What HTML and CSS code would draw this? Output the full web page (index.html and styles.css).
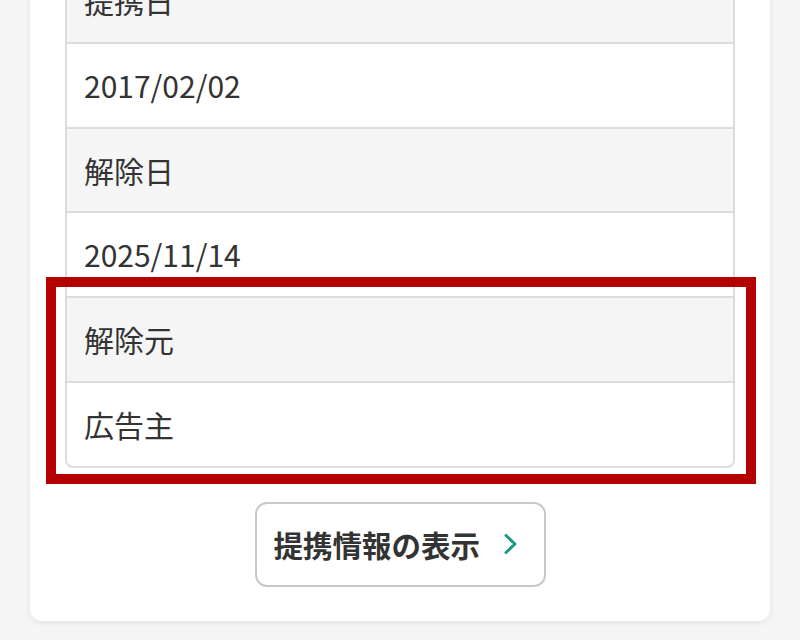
FILE: index.html
```html
<!DOCTYPE html>
<html lang="ja">
<head>
<meta charset="utf-8">
<link rel="stylesheet" href="styles.css">
</head>
<body>
<div class="page">
  <section class="card">
    <div class="table">
      <div class="cell label">提携日</div>
      <div class="cell value">2017/02/02</div>
      <div class="cell label">解除日</div>
      <div class="cell value">2025/11/14</div>
      <div class="highlight-group">
        <div class="cell label">解除元</div>
        <div class="cell value last">広告主</div>
        <div class="highlight"></div>
      </div>
    </div>
    <div class="actions">
      <button class="more-btn">提携情報の表示<svg class="chev" width="14" height="20" viewBox="0 0 14 20"><path d="M2 1.5 L11 10 L2 18.5" fill="none" stroke="#1c9a86" stroke-width="3" stroke-linecap="round" stroke-linejoin="round"/></svg></button>
    </div>
  </section>
</div>
</body>
</html>
```
FILE: styles.css
```css
* { box-sizing: border-box; }
html, body {
  margin: 0;
  padding: 0;
  background: #f5f5f5;
  font-family: "Noto Sans CJK JP", "Noto Sans", sans-serif;
  color: #333;
}
.page {
  width: 800px;
  padding: 0 30px 18px 30px;
}
.card {
  margin-top: -79px;
  background: #fff;
  border-radius: 0 0 12px 12px;
  box-shadow: 0 2px 6px rgba(0,0,0,0.08);
  padding: 36px 35px 34px 35px;
}
.table {
  border: 2px solid #dcdcdc;
  border-radius: 0 0 8px 8px;
}
.cell {
  font-size: 30px;
  line-height: 50.8px;
  padding: 16px 17px;
  border-bottom: 2px solid #dcdcdc;
}
.label { background: #f5f5f5; }
.value { background: #fff; }
.cell.last {
  border-bottom: none;
  border-radius: 0 0 7px 7px;
}
.highlight-group {
  position: relative;
}
.highlight {
  position: absolute;
  left: -21px;
  right: -23px;
  top: -21px;
  bottom: -18px;
  border: 10px solid #b50000;
  pointer-events: none;
}
.actions {
  display: flex;
  justify-content: center;
  padding-top: 34px;
}
.more-btn {
  display: flex;
  align-items: center;
  width: 291px;
  height: 85px;
  padding: 0 0 0 17px;
  background: #fff;
  border: 2px solid #c8c8c8;
  border-radius: 12px;
  font-family: "Noto Sans CJK JP", "Noto Sans", sans-serif;
  font-weight: bold;
  font-size: 29.5px;
  color: #333;
}
.chev {
  margin-left: 24px;
}
```
